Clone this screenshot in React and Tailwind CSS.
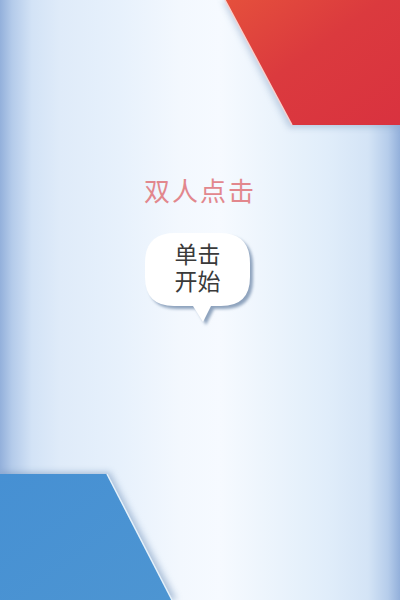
import React from 'react';

const App = () => {
  return (
    <div
      className="relative w-[400px] h-[600px] overflow-hidden bg-[linear-gradient(90deg,#93b0db_0%,#b4cbea_3%,#d3e3f6_8%,#dfebf9_15%,#e7f1fc_30%,#f3f8fe_45%,#f6faff_55%,#eaf3fc_70%,#e0edfa_82%,#d4e4f6_92%,#b6cdeb_97%,#93b0db_100%)]"
      style={{ fontFamily: '"Noto Sans CJK SC", "Noto Sans", sans-serif' }}
    >
      {/* corner shapes */}
      <svg className="absolute top-0 left-0" width="400" height="600" viewBox="0 0 400 600">
        <defs>
          <linearGradient id="red" x1="0" y1="0" x2="1" y2="1">
            <stop offset="0" stopColor="#e5503c" />
            <stop offset="0.45" stopColor="#db3a3e" />
            <stop offset="1" stopColor="#d9323f" />
          </linearGradient>
          <linearGradient id="blue" x1="0" y1="0" x2="1" y2="1">
            <stop offset="0" stopColor="#4690d3" />
            <stop offset="1" stopColor="#4d95d2" />
          </linearGradient>
          <filter id="sh" x="-20%" y="-20%" width="140%" height="140%">
            <feGaussianBlur stdDeviation="3" />
          </filter>
        </defs>
        <polygon points="222,0 400,0 400,128 289,128" fill="#8aa3c4" opacity="0.45" filter="url(#sh)" />
        <polygon points="225,0 400,0 400,125 292,125" fill="url(#red)" />
        <line x1="225" y1="0" x2="292" y2="125" stroke="#f6d2cf" strokeWidth="1.5" />
        <polygon points="0,472 110,472 177,600 0,600" fill="#6f90b8" opacity="0.5" filter="url(#sh)" />
        <polygon points="0,474 107,474 172,600 0,600" fill="url(#blue)" />
        <line x1="107" y1="474" x2="172" y2="600" stroke="#e6f2fb" strokeWidth="1.5" />
      </svg>

      <div className="relative flex flex-col items-center pt-[174px]">
        <div className="text-[26px] leading-[32px] tracking-[2px] text-[#e2878d]">双人点击</div>

        <div className="relative mt-[25px] ml-[-5px] w-[105px] h-[92px]">
          <svg className="absolute top-0 left-0" width="115" height="100" viewBox="0 0 115 100">
            <defs>
              <filter id="bs" x="-20%" y="-20%" width="140%" height="140%">
                <feGaussianBlur stdDeviation="1.5" />
              </filter>
            </defs>
            <path
              d="M30 2 H75 Q105 2 105 32 V46 Q105 75 76 75 H66 L58 91 L48 75 H29 Q0 75 0 46 V32 Q0 2 30 2 Z"
              fill="#8ea3bd"
              transform="translate(3,3)"
              filter="url(#bs)"
            />
            <path
              d="M30 2 H75 Q105 2 105 32 V46 Q105 75 76 75 H66 L58 91 L48 75 H29 Q0 75 0 46 V32 Q0 2 30 2 Z"
              fill="#ffffff"
            />
          </svg>
          <div className="relative flex flex-col items-center pt-[9px] text-[23px] leading-[27px] text-[#3a3a3a]">
            <span>单击</span>
            <span>开始</span>
          </div>
        </div>
      </div>
    </div>
  );
};

export default App;
